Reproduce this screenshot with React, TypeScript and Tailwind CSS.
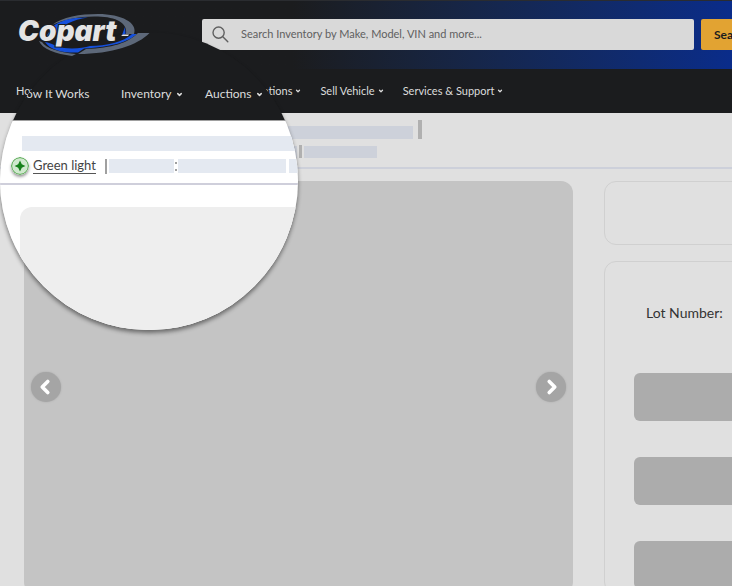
import { ChevronDown, ChevronLeft, ChevronRight } from "lucide-react";

const navLinks = [
  { name: "How It Works", url: "#how-it-works", menu: false },
  { name: "Inventory", url: "#inventory", menu: true },
  { name: "Auctions", url: "#auctions", menu: true },
  { name: "Locations", url: "#locations", menu: true },
  { name: "Sell Vehicle", url: "#sell-vehicle", menu: true },
  { name: "Services & Support", url: "#services", menu: true },
];

const Logo = () => (
  <a href="#home" aria-label="Copart home" className="relative z-20 ml-4 shrink-0">
    <svg width="136" height="48" viewBox="16 10 136 48">
      {/* grey ring */}
      <path
        fill="#5d6879"
        d="M52 24C62 16 80 13 98 13C122 13 138 22 134 33L126 33C128 22 116 16 98 15.5C80 15 66 18 52 24Z"
      />
      <path fill="#5d6879" d="M39 40C42 48 56 53 72 55L76 53C58 51 46 47 42 41Z" />
      {/* blue swoosh */}
      <path fill="#1550dc" d="M52 26C60 19 74 16 88 16.5C72 19 62 24 56 32L46 36Z" />
      <path
        fill="#1550dc"
        d="M45 41C52 42 56 46 64 47C74 48 84 47 90 45C106 45 124 41 132 33L137 33C128 41 112 46 84 47.5L78 51.5C62 52 50 49 45 41Z"
      />
      <path fill="#1550dc" d="M122 34L125 26L125.5 33Z" />
      {/* grey tail */}
      <path fill="#5d6879" d="M86 48C112 47 128 42 138 32L149.5 32C138 44 112 53 78 53Z" />
      <path fill="#e4e4e4" d="M121 35L123 33.5L129 33.5L128 35Z" />
      <text
        x="18"
        y="40"
        fill="#e4e4e4"
        stroke="#1b1c1e"
        strokeWidth="2"
        paintOrder="stroke"
        className="font-['Inter',sans-serif] text-[28px] font-black italic"
      >
        Copart
      </text>
    </svg>
  </a>
);

const SearchIcon = () => (
  <svg
    width="17"
    height="17"
    viewBox="0 0 17 17"
    fill="none"
    stroke="currentColor"
    strokeWidth="1.4"
    strokeLinecap="round"
    className="shrink-0"
  >
    <circle cx="6.6" cy="6.6" r="5.6" />
    <path d="M10.8 10.8L15.8 15.8" />
  </svg>
);

const Header = () => (
  <header className="text-[#dcdcdc]">
    <div className="flex h-[69px] items-center border-t border-[#2a2c30] bg-linear-to-r from-[#1b1c1e] from-40% to-[#0a2c8a] pb-px">
      <Logo />
      <form className="ml-[50px] flex flex-1 gap-[7px]">
        <label className="flex h-[31px] flex-1 items-center gap-3 rounded-xs bg-[#d9d9d9] pr-2 pl-[10px] text-[#606060]">
          <SearchIcon />
          <input
            type="search"
            aria-label="Search inventory"
            placeholder="Search Inventory by Make, Model, VIN and more..."
            className="min-w-0 flex-1 bg-transparent text-[11px] outline-none placeholder:text-[#606060]"
          />
        </label>
        <button
          type="button"
          className="-mr-12 w-[79px] shrink-0 rounded-xs bg-[#e2a332] pl-[13px] text-left text-xs font-bold text-[#1b1c1e]"
        >
          Search
        </button>
      </form>
    </div>
    <nav className="flex h-11 items-center gap-[19px] bg-[#1b1c1e] pl-4 text-[11px]">
      {navLinks.map((item) => (
        <a key={item.name} href={item.url} className="flex items-center gap-[3px] whitespace-nowrap">
          {item.name}
          {item.menu && <ChevronDown size={6} strokeWidth={5} />}
        </a>
      ))}
    </nav>
  </header>
);

const LotHeading = () => (
  <div className="border-b-2 border-[#cdd0da] pt-[7px] pb-[9px] pl-6">
    <div className="flex items-end gap-[5px]">
      <div className="h-[13px] w-[389px] bg-[#cdd1da]" />
      <div className="h-[19px] w-1 bg-[#b0b0b0]" />
    </div>
    <div className="mt-[6px] flex items-end gap-[2px]">
      <div className="h-3 w-[273px] bg-[#cdd1da]" />
      <div className="h-[13px] w-[3px] bg-[#b0b0b0]" />
      <div className="h-3 w-[73px] bg-[#cdd1da]" />
    </div>
  </div>
);

const arrowClass =
  "flex size-[30px] items-center justify-center rounded-full bg-[#a5a5a5] text-white shadow-[0_0_2px_#a5a5a5]";

const Gallery = () => (
  <section
    aria-label="Vehicle photos"
    className="flex flex-1 justify-between rounded-xl bg-[#c4c4c4] px-[7px] pt-[191px]"
  >
    <button type="button" aria-label="Previous photo" className={`${arrowClass} pr-[2px]`}>
      <ChevronLeft size={22} strokeWidth={4} />
    </button>
    <button type="button" aria-label="Next photo" className={`${arrowClass} pl-[2px]`}>
      <ChevronRight size={22} strokeWidth={4} />
    </button>
  </section>
);

const LotDetails = () => (
  <aside className="-mr-8 flex w-40 shrink-0 flex-col gap-4">
    <div className="h-16 shrink-0 rounded-xl border border-[#d0d0d0]" />
    <div className="flex-1 rounded-xl border border-[#d0d0d0] pt-[41px] pl-[29px]">
      <p className="pl-3 text-sm leading-5 text-[#333]">Lot Number:</p>
      <div className="mt-[50px] flex flex-col gap-9">
        <div className="h-12 rounded-md bg-[#acacac]" />
        <div className="h-12 rounded-md bg-[#acacac]" />
        <div className="h-12 rounded-md bg-[#acacac]" />
      </div>
    </div>
  </aside>
);

const GreenLight = () => (
  <svg width="18" height="18" viewBox="0 0 18 18" className="rounded-full shadow-[0_2px_3px_#0006]">
    <circle cx="9" cy="9" r="8.4" fill="#cfe8cd" stroke="#45a040" />
    <path fill="#16801a" d="M9 3.6L10.8 7.2L14.4 9L10.8 10.8L9 14.4L7.2 10.8L3.6 9L7.2 7.2Z" />
  </svg>
);

// Round magnifier that lies over the header and the lot heading
const Magnifier = () => (
  <div className="absolute top-8 left-0 z-10 flex size-[298px] flex-col overflow-hidden rounded-full shadow-[0_3px_4px_#0007]">
    <div className="flex h-[89px] shrink-0 items-end border-b border-[#a0a0a0] bg-[#1b1c1e] pb-4 pl-[17px] text-xs leading-5 text-[#dcdcdc]">
      <span className="w-[104px]">How It Works</span>
      <span className="flex w-[84px] items-center gap-[5px]">
        Inventory <ChevronDown size={7} strokeWidth={5} />
      </span>
      <span className="flex items-center gap-[5px]">
        Auctions <ChevronDown size={7} strokeWidth={5} />
      </span>
    </div>
    <div className="flex flex-1 flex-col bg-white">
      <div className="mt-[15px] ml-[22px] h-[15px] bg-[#e4e9f1]" />
      <div className="mt-[5px] flex h-5 items-center pl-[11px]">
        <GreenLight />
        <a href="#green-light" className="ml-1 border-b border-[#555] text-[13px] leading-[15px] text-[#444]">
          Green light
        </a>
        <div className="ml-[9px] h-[15px] w-[2px] bg-[#a0a0a0]" />
        <div className="ml-[2px] h-[14px] w-[65px] bg-[#e4e9f1]" />
        <div className="ml-px flex h-[9px] w-[2px] flex-col justify-between">
          <i className="h-[2px] bg-[#a0a0a0]" />
          <i className="h-[2px] bg-[#a0a0a0]" />
        </div>
        <div className="ml-px h-[14px] w-[108px] bg-[#e4e9f1]" />
        <div className="ml-[3px] h-[14px] flex-1 bg-[#e4e9f1]" />
      </div>
      <div className="mt-[7px] h-[2px] bg-[#cfcfdb]" />
      <div className="mt-[22px] ml-5 flex-1 rounded-tl-xl bg-[#eee]" />
    </div>
  </div>
);

const App = () => {
  return (
    <div className="relative flex h-screen flex-col overflow-hidden bg-[#e0e0e0] font-['Lato',sans-serif]">
      <Header />
      <Magnifier />
      <LotHeading />
      <main className="-mb-2 flex flex-1 gap-[31px] pt-3 pl-6">
        <Gallery />
        <LotDetails />
      </main>
    </div>
  );
};

export default App;
